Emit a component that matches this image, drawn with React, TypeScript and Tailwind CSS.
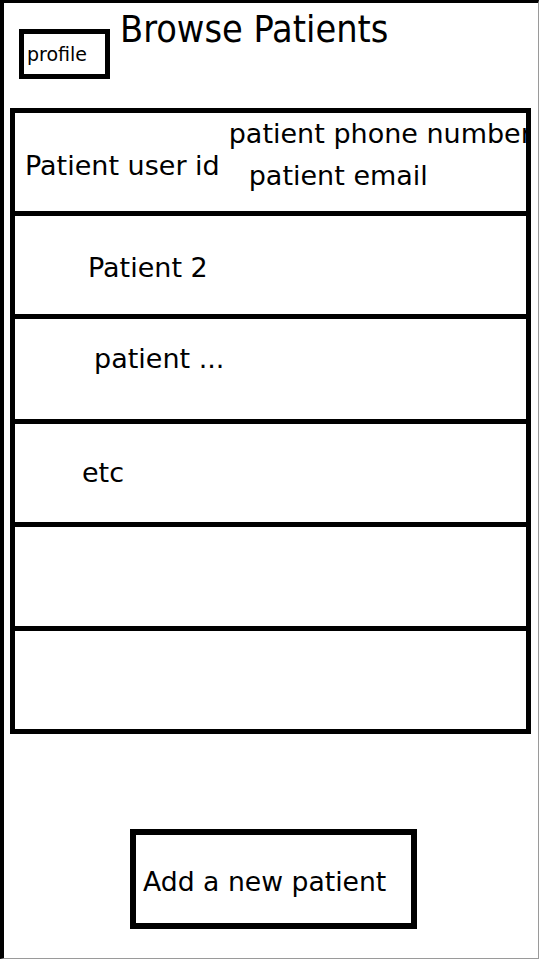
const body = "font-['DejaVu_Sans','Liberation_Sans',sans-serif]";

export default function App() {
  const rows = [
    { h: "h-[103px]", label: "Patient 2", pad: "pl-[73px] pt-[37px]" },
    { h: "h-[105px]", label: "patient ...", pad: "pl-[79px] pt-[25px]" },
    { h: "h-[103px]", label: "etc", pad: "pl-[67px] pt-[34px]" },
    { h: "h-[104px]", label: "", pad: "" },
    { h: "h-[103px]", label: "", pad: "" },
  ];

  return (
    <div className={`w-[540px] h-[960px] bg-white text-black ${body}`}>
      <div className="w-[539px] h-[959px] border-l-4 border-t-[3px] border-r border-b border-l-black border-t-black border-r-[#9a9a9a] border-b-[#9a9a9a] flex flex-col">
        {/* header */}
        <div className="h-[105px] flex items-start pl-[15px]">
          <div className="mt-[26px] w-[91px] h-[50px] border-[5px] border-black flex items-center pl-[3px]">
            <span className="text-[19px] leading-none">profile</span>
          </div>
          <h1 className="ml-[10px] mt-[8px] text-[37.5px] leading-none font-normal font-stretch-condensed font-['DejaVu_Sans_Condensed','DejaVu_Sans',sans-serif] whitespace-nowrap">
            Browse Patients
          </h1>
        </div>

        {/* patient list */}
        <div className="ml-[6px] w-[521px] border-[5px] border-black text-[27px] leading-[30px]">
          <div className="h-[98px] flex overflow-hidden whitespace-nowrap">
            <span className="pl-[10px] pt-[38px] shrink-0">Patient user id</span>
            <div className="ml-[9px] pt-[6px] shrink-0 flex flex-col">
              <span>patient phone number</span>
              <span className="pl-[20px] mt-[12px]">patient email</span>
            </div>
          </div>
          {rows.map((r, i) => (
            <div key={i} className={`${r.h} border-t-[5px] border-black overflow-hidden whitespace-nowrap ${r.pad}`}>
              {r.label}
            </div>
          ))}
        </div>

        {/* add button */}
        <div className="mt-[95px] ml-[126px] w-[287px] h-[100px] border-[6px] border-black flex items-center pl-[7px] pt-[6px]">
          <span className="text-[26.67px] leading-[30px] whitespace-nowrap">Add a new patient</span>
        </div>
      </div>
    </div>
  );
}
